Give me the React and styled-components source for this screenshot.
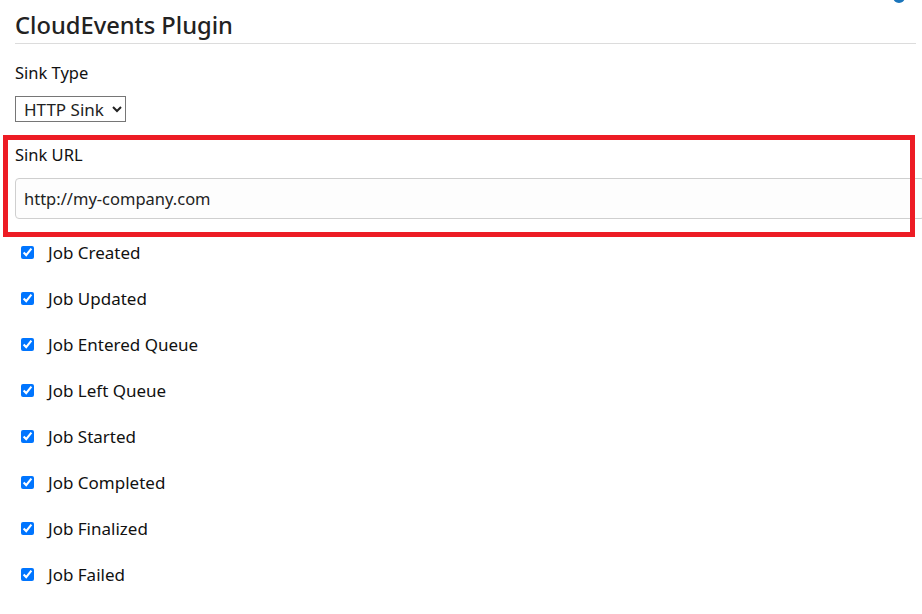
import React from 'react';
import styled, { createGlobalStyle } from 'styled-components';

const GlobalStyle = createGlobalStyle`
  body {
    margin: 0;
    background: #fff;
    font-family: 'Noto Sans', 'Open Sans', sans-serif;
    color: #212529;
  }
`;

const Page = styled.div`
  position: relative;
  padding: 0 6px 0 15px;
  width: 922px;
  box-sizing: border-box;
  overflow: hidden;
`;

const Header = styled.div`
  display: flex;
  justify-content: space-between;
  align-items: flex-start;
  border-bottom: 1px solid #dcdcdc;
  height: 44px;
  box-sizing: border-box;
`;

const Title = styled.h2`
  margin: 10px 0 0;
  font-size: 23.7px;
  font-weight: 500;
  line-height: 30px;
  color: #222;
`;

const HelpDot = styled.span`
  width: 12px;
  height: 12px;
  margin: -9px 11px 0 0;
  border-radius: 50%;
  background: #1b75bb;
`;

const Field = styled.div`
  display: flex;
  flex-direction: column;
  align-items: flex-start;
  padding-top: ${(p) => p.$top || 0}px;
`;

const Label = styled.label`
  font-size: 16.5px;
  font-weight: 400;
  line-height: 22px;
  color: #111;
`;

const Select = styled.select`
  margin-top: 12px;
  height: 26px;
  padding: 0 5px 0 4px;
  font-family: inherit;
  font-size: 17px;
  color: #222;
  border: 1px solid #767676;
  border-radius: 0;
  background: #fff;
`;

const Input = styled.input`
  margin-top: 12px;
  width: 910px;
  height: 41px;
  box-sizing: border-box;
  padding: 0 8px;
  font-family: inherit;
  font-size: 16.5px;
  color: #222;
  border: 1px solid #cfcfcf;
  border-radius: 4px;
  background: #fdfdfd;
`;

const Checks = styled.div`
  display: flex;
  flex-direction: column;
  gap: 22px;
  padding-top: 21px;
`;

const CheckRow = styled.label`
  display: flex;
  align-items: center;
  gap: 14px;
  height: 24px;
  font-size: 17px;
  font-weight: 400;
  color: #111;
`;

const Box = styled.input`
  margin: 0 0 0 6px;
  width: 13px;
  height: 13px;
  accent-color: #0075ff;
`;

const Frame = styled.div`
  position: absolute;
  left: 3px;
  top: 135px;
  width: 902px;
  height: 92px;
  border: 5px solid #ed1c24;
  pointer-events: none;
`;

const events = [
  'Job Created',
  'Job Updated',
  'Job Entered Queue',
  'Job Left Queue',
  'Job Started',
  'Job Completed',
  'Job Finalized',
  'Job Failed',
];

export default function App() {
  return (
    <Page>
      <GlobalStyle />
      <Header>
        <Title>CloudEvents Plugin</Title>
        <HelpDot />
      </Header>
      <Field $top={18}>
        <Label>Sink Type</Label>
        <Select defaultValue="http">
          <option value="http">HTTP Sink</option>
        </Select>
      </Field>
      <Field $top={22}>
        <Label>Sink URL</Label>
        <Input defaultValue="http://my-company.com" />
      </Field>
      <Checks>
        {events.map((e) => (
          <CheckRow key={e}>
            <Box type="checkbox" defaultChecked />
            {e}
          </CheckRow>
        ))}
      </Checks>
      <Frame />
    </Page>
  );
}
